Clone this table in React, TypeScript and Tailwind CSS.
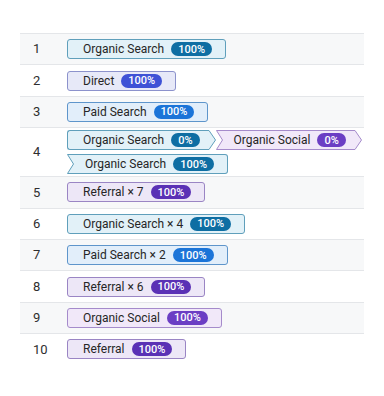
import React from "react";

type Kind = "organic" | "direct" | "paid" | "referral" | "social";

const palette: Record<Kind, { bg: string; border: string; badge: string; fill: string; stroke: string }> = {
  organic: { bg: "bg-[#e2f1f8]", border: "border-[#5f9fbb]", badge: "bg-[#0e6ea3]", fill: "#e2f1f8", stroke: "#5f9fbb" },
  direct: { bg: "bg-[#e7e9f8]", border: "border-[#8c92cc]", badge: "bg-[#3e52d6]", fill: "#e7e9f8", stroke: "#8c92cc" },
  paid: { bg: "bg-[#e2eefa]", border: "border-[#5e95cb]", badge: "bg-[#1b74d8]", fill: "#e2eefa", stroke: "#5e95cb" },
  referral: { bg: "bg-[#ede7f7]", border: "border-[#9a85c4]", badge: "bg-[#5a31b5]", fill: "#ede7f7", stroke: "#9a85c4" },
  social: { bg: "bg-[#f1e8f9]", border: "border-[#a58bcb]", badge: "bg-[#6b3ec4]", fill: "#f1e8f9", stroke: "#a58bcb" },
};

type ChipProps = {
  label: string;
  pct: string;
  kind: Kind;
  notch?: boolean;
  arrow?: boolean;
};

const Chip = ({ label, pct, kind, notch = false, arrow = false }: ChipProps) => {
  const c = palette[kind];
  return (
    <div className="flex h-5 items-stretch">
      {notch && (
        <svg width="7" height="20" className="block shrink-0 overflow-visible">
          <polygon points="0.5,0.5 7,0.5 7,19.5 0.5,19.5 6.5,10" fill={c.fill} />
          <polyline points="7,0.5 0.5,0.5 6.5,10 0.5,19.5 7,19.5" fill="none" stroke={c.stroke} strokeWidth="1" />
        </svg>
      )}
      <div
        className={`flex items-center border-y ${c.bg} ${c.border} ${
          notch ? "pl-[11px]" : "rounded-l-[3px] border-l pl-[15px]"
        } ${arrow ? "pr-[9px]" : "rounded-r-[3px] border-r pr-[13px]"}`}
      >
        <span className="whitespace-nowrap text-[12px] leading-none text-[#262626]">{label}</span>
        <span
          className={`ml-[7px] flex h-[14px] items-center rounded-full px-[7px] text-[11px] font-medium leading-none text-white ${c.badge}`}
        >
          {pct}
        </span>
      </div>
      {arrow && (
        <svg width="7" height="20" className="block shrink-0 overflow-visible">
          <polygon points="0,0.5 6.5,10 0,19.5" fill={c.fill} />
          <polyline points="0,0.5 6.5,10 0,19.5" fill="none" stroke={c.stroke} strokeWidth="1" />
        </svg>
      )}
    </div>
  );
};

const rows: { n: number; chips: ChipProps[][] }[] = [
  { n: 1, chips: [[{ label: "Organic Search", pct: "100%", kind: "organic" }]] },
  { n: 2, chips: [[{ label: "Direct", pct: "100%", kind: "direct" }]] },
  { n: 3, chips: [[{ label: "Paid Search", pct: "100%", kind: "paid" }]] },
  {
    n: 4,
    chips: [
      [
        { label: "Organic Search", pct: "0%", kind: "organic", arrow: true },
        { label: "Organic Social", pct: "0%", kind: "social", notch: true, arrow: true },
      ],
      [{ label: "Organic Search", pct: "100%", kind: "organic", notch: true }],
    ],
  },
  { n: 5, chips: [[{ label: "Referral × 7", pct: "100%", kind: "referral" }]] },
  { n: 6, chips: [[{ label: "Organic Search × 4", pct: "100%", kind: "organic" }]] },
  { n: 7, chips: [[{ label: "Paid Search × 2", pct: "100%", kind: "paid" }]] },
  { n: 8, chips: [[{ label: "Referral × 6", pct: "100%", kind: "referral" }]] },
  { n: 9, chips: [[{ label: "Organic Social", pct: "100%", kind: "social" }]] },
  { n: 10, chips: [[{ label: "Referral", pct: "100%", kind: "referral" }]] },
];

export default function App() {
  return (
    <div className="min-h-[396px] w-[384px] bg-white pt-[33px]" style={{ fontFamily: "Roboto, 'Liberation Sans', sans-serif" }}>
      <div className="mx-5">
        {rows.map((row, i) => (
          <div
            key={row.n}
            className={`flex border-t border-[#e4e6e9] ${i % 2 === 0 ? "bg-[#f7f8f9]" : "bg-white"}`}
          >
            <div className="flex w-[47px] shrink-0 items-center pl-[13px] text-[13px] text-[#2e2e2e]">{row.n}</div>
            <div className="flex min-h-[30.4px] flex-col justify-center gap-1 py-[2px]">
              {row.chips.map((line, j) => (
                <div key={j} className="flex">
                  {line.map((chip, k) => (
                    <Chip key={k} {...chip} />
                  ))}
                </div>
              ))}
            </div>
          </div>
        ))}
      </div>
    </div>
  );
}
